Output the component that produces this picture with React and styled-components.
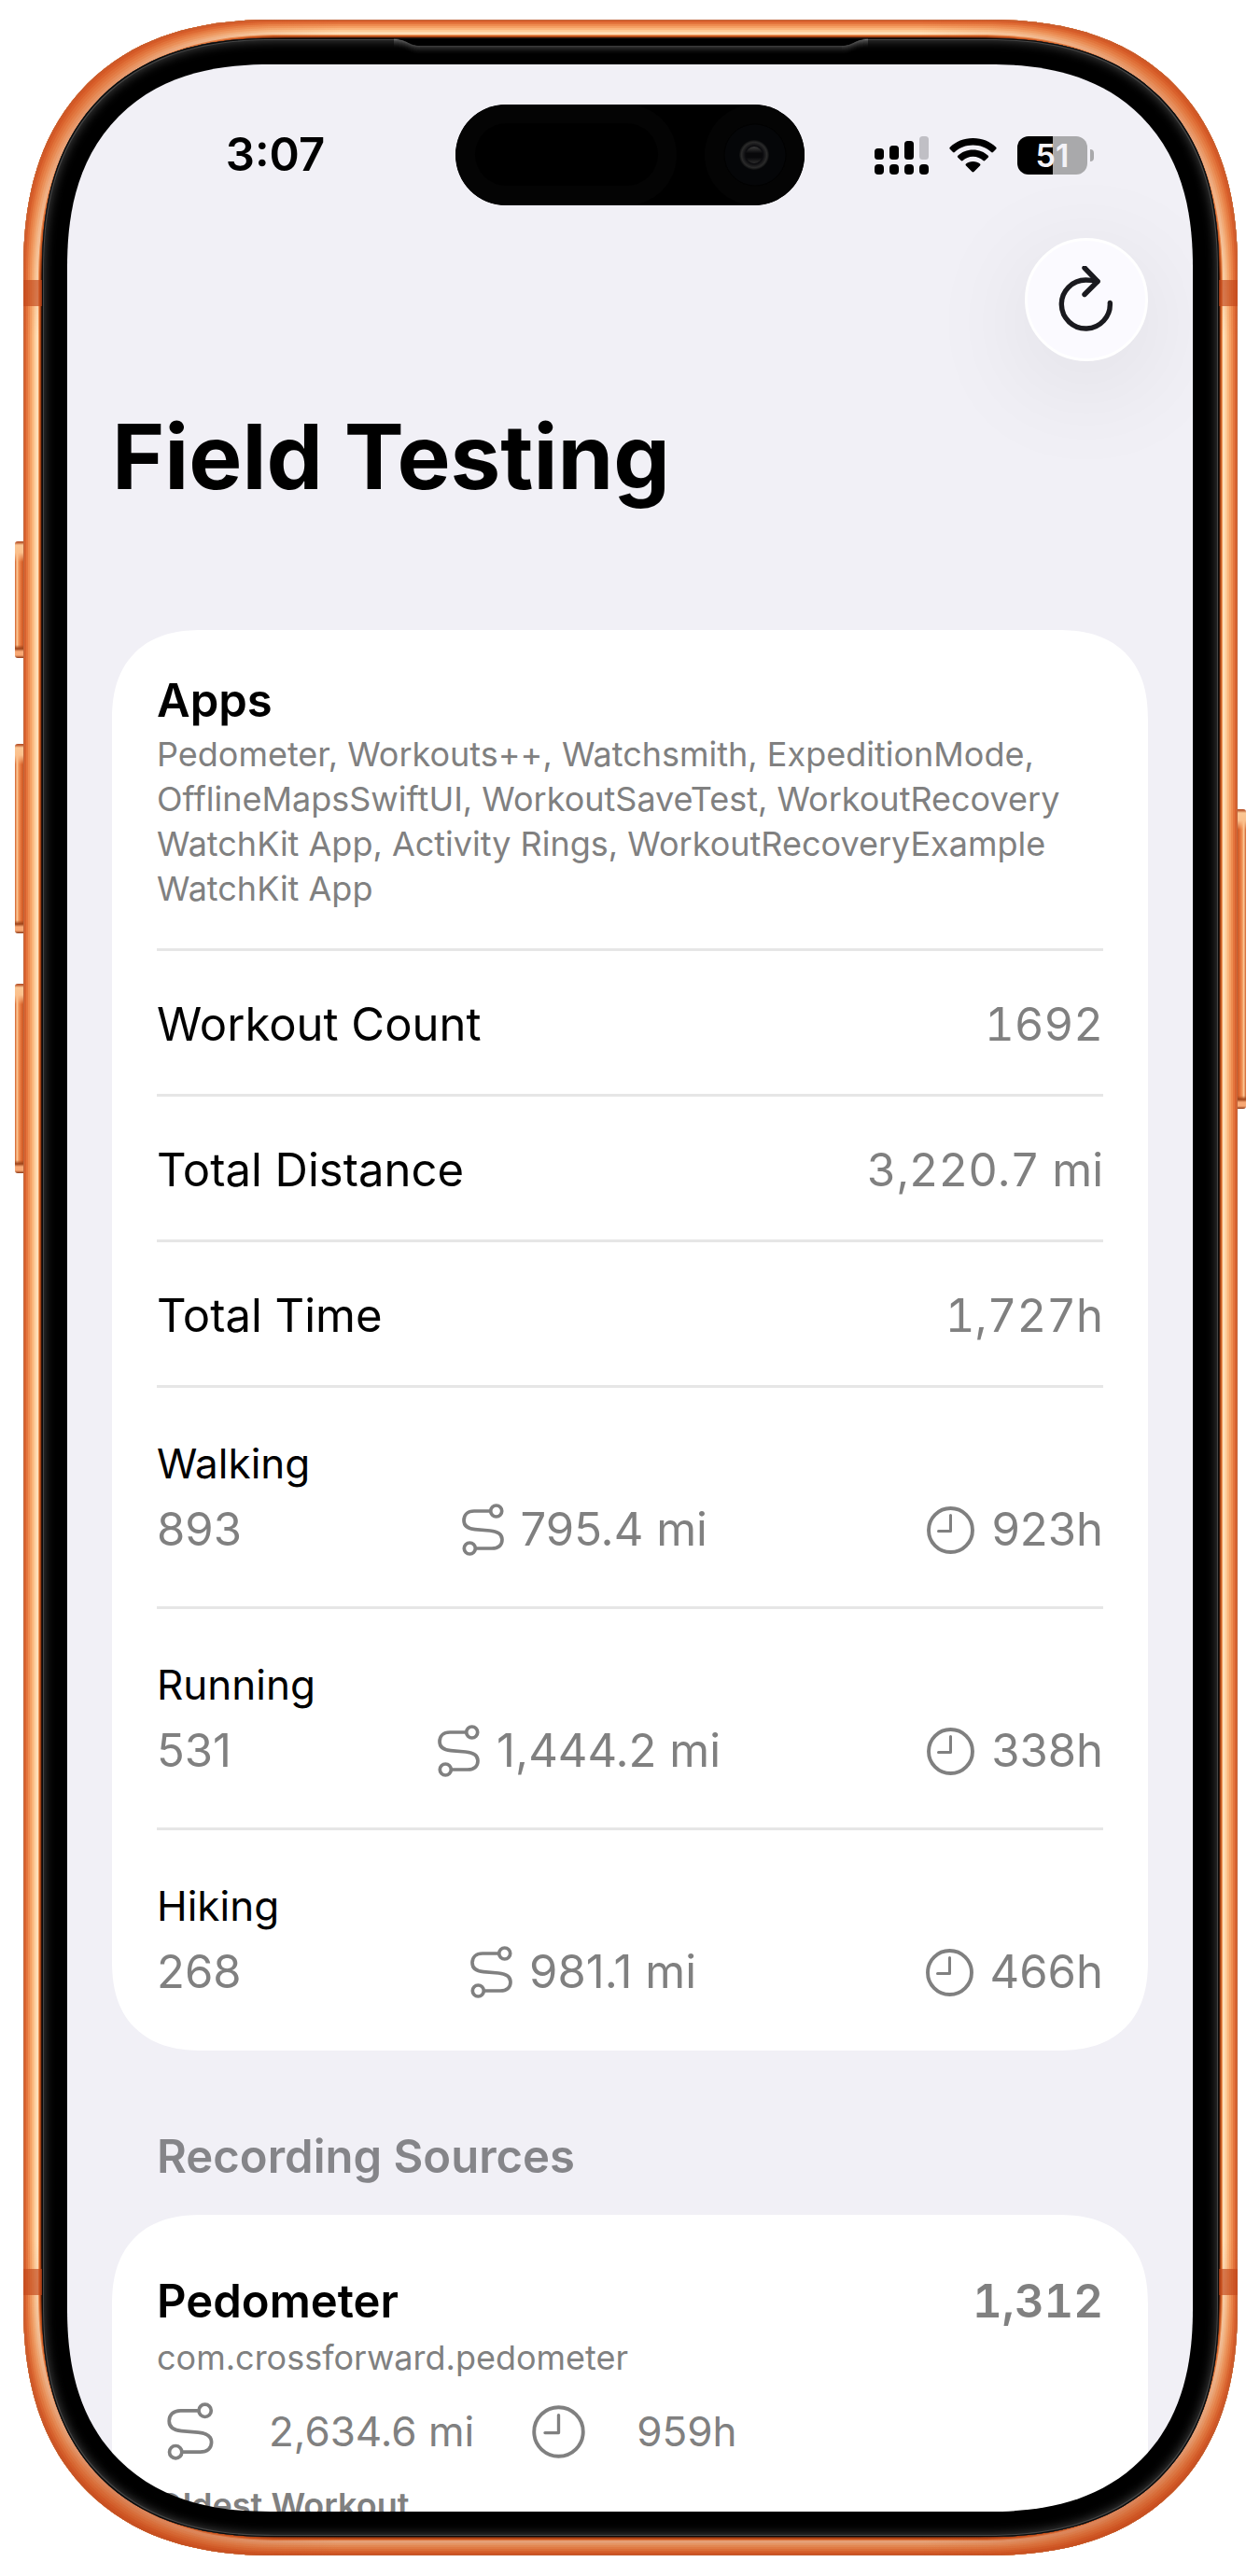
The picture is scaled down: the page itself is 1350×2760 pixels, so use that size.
import React from "react";
import styled, { createGlobalStyle, css } from "styled-components";

const apps = [
  "Pedometer",
  "Workouts++",
  "Watchsmith",
  "ExpeditionMode",
  "OfflineMapsSwiftUI",
  "WorkoutSaveTest",
  "WorkoutRecovery WatchKit App",
  "Activity Rings",
  "WorkoutRecoveryExample WatchKit App",
];

const totals = [
  { label: "Workout Count", value: "1692" },
  { label: "Total Distance", value: "3,220.7 mi" },
  { label: "Total Time", value: "1,727h" },
];

const activities = [
  { name: "Walking", count: "893", distance: "795.4 mi", time: "923h" },
  { name: "Running", count: "531", distance: "1,444.2 mi", time: "338h" },
  { name: "Hiking", count: "268", distance: "981.1 mi", time: "466h" },
];

const sources = [
  {
    name: "Pedometer",
    bundle: "com.crossforward.pedometer",
    count: "1,312",
    distance: "2,634.6 mi",
    time: "959h",
  },
];

const sideButtons = [
  { side: "left", top: 559, height: 125 },
  { side: "left", top: 776, height: 203 },
  { side: "left", top: 1033, height: 203 },
  { side: "right", top: 846, height: 321 },
];

const GlobalStyle = createGlobalStyle`
  * {
    box-sizing: border-box;
  }

  body {
    margin: 0;
    background: #fff;
    color: #000;
    font-family: Inter, "Liberation Sans", sans-serif;
  }

  h1, h2, h3, p, dl, dt, dd {
    margin: 0;
    padding: 0;
  }
`;

// continuous corners where the browser has them, plain round ones elsewhere
const corner = (round, smooth) => css`
  border-radius: ${round}px;

  @supports (corner-shape: superellipse(1.24)) {
    border-radius: ${smooth}px;
    corner-shape: superellipse(1.24);
  }
`;

const Page = styled.div`
  height: 100vh;
  padding: 21px 24px 22px 25px;
`;

const Frame = styled.div`
  position: relative;
  display: flex;
  height: 100%;
  padding: 20px;
  ${corner(236, 270)}
  background: #32160a;
  box-shadow:
    inset 0 0 0 1px #c0663c,
    inset 0 0 0 3px #d9622f,
    inset 0 0 0 5px #e4753d,
    inset 0 0 0 7px #ee8c50,
    inset 0 0 0 9px #f5a064,
    inset 0 0 0 11px #fab57b,
    inset 0 0 0 13px #fdca97,
    inset 0 0 0 15px #fedbb2,
    inset 0 0 0 16px #fee2bf,
    inset 0 0 0 17px #f09a5c,
    inset 0 0 0 18px #cc5f26,
    inset 0 0 0 19px #9c3f14;

  &::before {
    content: "";
    position: absolute;
    inset: 0;
    ${corner(236, 270)}
    background:
      radial-gradient(circle at 40px 40px, rgba(206, 78, 28, 0.5) 60px, rgba(206, 78, 28, 0) 300px),
      radial-gradient(circle at calc(100% - 40px) 40px, rgba(206, 78, 28, 0.5) 60px, rgba(206, 78, 28, 0) 300px),
      radial-gradient(circle at 40px calc(100% - 40px), rgba(196, 72, 26, 0.5) 60px, rgba(196, 72, 26, 0) 300px),
      radial-gradient(circle at calc(100% - 40px) calc(100% - 40px), rgba(196, 72, 26, 0.5) 60px, rgba(196, 72, 26, 0) 300px),
      linear-gradient(to top, rgba(190, 66, 20, 0.4) 20px, rgba(190, 66, 20, 0) 120px);
  }
`;

const SideButton = styled.span`
  position: absolute;
  top: ${({ $top }) => $top}px;
  ${({ $side }) => $side}: -9px;
  width: 9px;
  height: ${({ $height }) => $height}px;
  border-radius: ${({ $side }) => ($side === "left" ? "3px 0 0 3px" : "0 3px 3px 0")};
  background:
    linear-gradient(
      to bottom,
      #b9542a 1px,
      #fbc794 4px,
      #fbc08c 12px,
      rgba(240, 140, 80, 0) 22px calc(100% - 14px),
      #9c4218 calc(100% - 10px),
      #f8a874 calc(100% - 7px) calc(100% - 3px),
      #8a3513 100%
    ),
    linear-gradient(
      ${({ $side }) => ($side === "left" ? "to right" : "to left")},
      #d9743f 1px,
      #ffd2a2 2px,
      #f19458 4px,
      #de6a32 7px,
      #cb5723 9px
    );
`;

const AntennaBand = styled.span`
  position: absolute;
  left: 0;
  right: 0;
  ${({ $edge }) => $edge}: 279px;
  height: 28px;
  background: rgba(194, 72, 28, 0.66);
`;

const Bezel = styled.div`
  position: relative;
  flex: 1;
  min-width: 0;
  padding: 28px 28px 27px 27px;
  ${corner(216, 248)}
  background: #000;
  box-shadow:
    inset 0 0 0 1px #0a0a0a,
    inset 0 0 0 2px #444,
    inset 0 0 12px 2px #484848;
`;

const Earpiece = styled.svg`
  position: absolute;
  top: 0;
  left: 50%;
  width: 508px;
  height: 24px;
  margin-left: -254px;
`;

const Screen = styled.main`
  position: relative;
  height: 100%;
  overflow-x: hidden;
  overflow-y: auto;
  scrollbar-width: none;
  ${corner(189, 218)}
  background: #f1f0f6;
`;

const StatusBar = styled.header`
  display: grid;
  grid-template-columns: 1fr 374px 1fr;
  align-items: center;
  padding-top: 43px;
`;

const Time = styled.time`
  padding-left: 30px;
  text-align: center;
  font-size: 49px;
  line-height: 60px;
  font-weight: 600;
`;

const Island = styled.svg`
  display: block;
  width: 374px;
  height: 108px;
`;

const StatusIcons = styled.div`
  display: flex;
  justify-content: center;
  align-items: center;
  gap: 22px;
  padding-right: 31px;
`;

const Battery = styled.div`
  display: flex;
  align-items: center;
  gap: 3px;

  &::after {
    content: "";
    width: 4px;
    height: 13px;
    border-radius: 0 4px 4px 0;
    background: #a9a9ab;
  }
`;

const BatteryLevel = styled.span`
  width: 75px;
  height: 41px;
  border-radius: 12px;
  background: linear-gradient(to right, #000 51%, #a9a9ab 51%);
  color: #f4f3f8;
  font-size: 34px;
  line-height: 41px;
  font-weight: 600;
  text-align: center;
`;

const Toolbar = styled.div`
  display: flex;
  justify-content: flex-end;
  padding: 35px 48px 0;
`;

const RefreshButton = styled.button`
  display: flex;
  justify-content: center;
  align-items: center;
  width: 132px;
  height: 132px;
  padding: 0;
  border: 3px solid #fff;
  border-radius: 50%;
  background: #fbfaff;
  box-shadow: 0 24px 120px rgba(0, 0, 0, 0.09);
  cursor: pointer;
`;

const Title = styled.h1`
  padding: 42px 48px 0;
  font-size: 96px;
  line-height: 120px;
  font-weight: 700;
`;

const Card = styled.section`
  margin: ${({ $first }) => ($first ? "126px" : "29px")} 48px 0;
  padding: 0 48px 2px;
  ${corner(84, 96)}
  background: #fff;
`;

const Divided = css`
  border-bottom: 3px solid #e6e6e6;

  &:last-child {
    border-bottom: 0;
  }
`;

const AppsRow = styled.div`
  padding: 43px 0 40px;
  ${Divided}
`;

const RowTitle = styled.h3`
  font-size: 49px;
  line-height: 66px;
  font-weight: 600;
`;

const Caption = styled.p`
  color: #808080;
  font-size: 36px;
  line-height: 48px;
  font-weight: ${({ $strong }) => ($strong ? 600 : 400)};
`;

const Totals = styled.dl`
  border-bottom: 3px solid #e6e6e6;
`;

const TotalRow = styled.div`
  display: flex;
  justify-content: space-between;
  padding: 48px 0 43px;
  font-size: 49px;
  line-height: 62px;
  ${Divided}

  dd {
    color: #808080;
    font-variant-numeric: tabular-nums;
  }
`;

const ActivityRow = styled.div`
  padding: 51px 0 49px;
  ${Divided}
`;

const ActivityName = styled.h3`
  font-size: 44px;
  line-height: 60px;
  font-weight: 400;
`;

const ActivityStats = styled.div`
  display: flex;
  justify-content: space-between;
  align-items: center;
  margin-top: 8px;
  color: #808080;
  font-size: 49px;
  line-height: 66px;
`;

const Stat = styled.span`
  display: flex;
  align-items: center;
  gap: 18px;
`;

const SectionHeading = styled.h2`
  padding: 81px 96px 0;
  color: #858589;
  font-size: 49px;
  line-height: 66px;
  font-weight: 600;
`;

const SourceRow = styled.article`
  padding: 60px 0 48px;
  ${Divided}
`;

const SourceHead = styled.div`
  display: flex;
  justify-content: space-between;
  margin-bottom: 3px;
`;

const SourceCount = styled.span`
  color: #808080;
  font-size: 49px;
  line-height: 66px;
  font-weight: 600;
  font-variant-numeric: tabular-nums;
`;

const SourceStats = styled.div`
  display: flex;
  gap: 54px;
  margin: 19px 0;
  color: #808080;
  font-size: 44px;
  line-height: 72px;
`;

const SourceStat = styled.span`
  display: grid;
  grid-template-columns: 72px auto;
  gap: 48px;
  align-items: center;

  svg {
    justify-self: center;
  }
`;

const RouteIcon = ({ size = 56 }) => (
  <svg width={(size * 45) / 56} height={size} viewBox="0 0 45 56" fill="none" stroke="currentColor" strokeWidth={(3.7 * 56) / size} aria-hidden="true">
    <circle cx="36.7" cy="8" r="6" />
    <circle cx="8.3" cy="48" r="6" />
    <path d="M30.5 8H13C6 8 2 12 2 18C2 24 7 27 14 27.6L30 29C38 29.8 43 33 43 38.5C43 44.5 39 48 32 48H14.5" />
  </svg>
);

const ClockIcon = ({ size = 51 }) => (
  <svg width={size} height={size} viewBox="0 0 51 51" fill="none" stroke="currentColor" strokeWidth={(3.9 * 51) / size} strokeLinecap="round" strokeLinejoin="round" aria-hidden="true">
    <circle cx="25.5" cy="25.5" r="23.5" />
    <path d="M25.5 9.5V26.5H12.5" strokeWidth="3" />
  </svg>
);

const RefreshIcon = () => (
  <svg width="60" height="72" viewBox="0 0 60 72" fill="none" stroke="#1a1a1f" strokeWidth="5.4" strokeLinecap="round" strokeLinejoin="round" aria-hidden="true">
    <path d="M55.3 39.5A26 26 0 1 1 29.3 15Q36 15 42 16.5" />
    <path d="M28 2L42 16.5L28 30.5" />
  </svg>
);

const SignalIcon = () => (
  <svg width="58" height="41" viewBox="0 0 58 41" aria-hidden="true">
    <rect x="0" y="13" width="10" height="12" rx="3.5" />
    <rect x="16" y="10" width="10" height="15" rx="3.5" />
    <rect x="32" y="5" width="10" height="20" rx="3.5" />
    <rect x="48" y="0" width="10" height="25" rx="3.5" fill="#c0bfc5" />
    <rect x="0" y="30" width="10" height="11" rx="4" />
    <rect x="16" y="30" width="10" height="11" rx="4" />
    <rect x="32" y="30" width="10" height="11" rx="4" />
    <rect x="48" y="30" width="10" height="11" rx="4" />
  </svg>
);

const WifiIcon = () => (
  <svg width="51" height="37" viewBox="0 0 51 37" aria-hidden="true">
    <path d="M25.5 0C35.5 0 44 3.6 50.2 9.8C50.8 10.4 50.8 11.1 50.2 11.7L47 15C46.4 15.6 45.7 15.6 45.1 15C40 10.2 33.2 7.5 25.5 7.5S11 10.2 5.9 15C5.3 15.6 4.6 15.6 4 15L.8 11.7C.2 11.1.2 10.4.8 9.8C7 3.6 15.5 0 25.5 0Z" />
    <path d="M25.5 12.5C32 12.5 37.6 14.8 41.7 18.8C42.3 19.4 42.3 20.1 41.7 20.7L38.3 24C37.7 24.6 37 24.6 36.4 24C33.6 21.4 29.8 19.8 25.5 19.8S17.4 21.4 14.6 24C14 24.6 13.3 24.6 12.7 24L9.3 20.7C8.7 20.1 8.7 19.4 9.3 18.8C13.4 14.8 19 12.5 25.5 12.5Z" />
    <path d="M25.5 25C28.6 25 31.2 26 33 27.6C33.6 28.2 33.6 28.9 33 29.5L26.5 36.1C25.9 36.7 25.1 36.7 24.5 36.1L18 29.5C17.4 28.9 17.4 28.2 18 27.6C19.8 26 22.4 25 25.5 25Z" />
  </svg>
);

const Camera = () => (
  <Island viewBox="0 0 374 108" aria-hidden="true">
    <defs>
      <radialGradient id="lens">
        <stop offset="0" stopColor="#060608" />
        <stop offset="0.6" stopColor="#0c0c0f" />
        <stop offset="0.85" stopColor="#2a2a2a" />
        <stop offset="1" stopColor="#0b0c0d" />
      </radialGradient>
      <linearGradient id="glint" x1="0" y1="0" x2="0" y2="1">
        <stop offset="0" stopColor="#3c3c3c" />
        <stop offset="0.4" stopColor="#08080a" />
        <stop offset="0.65" stopColor="#08080a" />
        <stop offset="1" stopColor="#2c2c2c" />
      </linearGradient>
      <clipPath id="pill">
        <rect width="374" height="108" rx="54" />
      </clipPath>
    </defs>
    <g clipPath="url(#pill)">
      <rect width="374" height="108" fill="#000" />
      <rect width="237" height="108" rx="54" fill="#040404" />
      <rect x="21" y="20" width="196" height="67" rx="34" fill="#000" />
      <circle cx="321" cy="54" r="54" fill="#040404" />
      <circle cx="321" cy="54" r="33" fill="#050608" stroke="#020202" />
      <circle cx="320" cy="54" r="16" fill="url(#lens)" />
      <circle cx="320" cy="54" r="9" fill="url(#glint)" />
    </g>
  </Island>
);

const slotEdge = "M0 1C14 1 16 8 28 8H480C492 8 494 1 508 1";
const slotGlow = [0.27, 0.22, 0.17, 0.13, 0.1, 0.07, 0.05, 0.03, 0.02];

const EarpieceSlot = () => (
  <Earpiece viewBox="0 0 508 24" fill="none" aria-hidden="true">
    <path d="M28 1H480V20H28Z" fill="#000" />
    {slotGlow.map((opacity, index) => (
      <path key={index} d={slotEdge} stroke="#fff" strokeOpacity={opacity} transform={`translate(0 ${index})`} />
    ))}
    <path d={`${slotEdge}Z`} fill="#000" />
  </Earpiece>
);

const App = () => {
  return (
    <>
      <GlobalStyle />
      <Page>
        <Frame>
          {sideButtons.map((button) => (
            <SideButton
              key={`${button.side}-${button.top}`}
              $side={button.side}
              $top={button.top}
              $height={button.height}
            />
          ))}
          <AntennaBand $edge="top" />
          <AntennaBand $edge="bottom" />

          <Bezel>
            <EarpieceSlot />
            <Screen>
              <StatusBar>
                <Time>3:07</Time>
                <Camera />
                <StatusIcons>
                  <SignalIcon />
                  <WifiIcon />
                  <Battery>
                    <BatteryLevel>51</BatteryLevel>
                  </Battery>
                </StatusIcons>
              </StatusBar>

              <Toolbar>
                <RefreshButton type="button" aria-label="Refresh">
                  <RefreshIcon />
                </RefreshButton>
              </Toolbar>

              <Title>Field Testing</Title>

              <Card $first>
                <AppsRow>
                  <RowTitle>Apps</RowTitle>
                  <Caption>{apps.join(", ")}</Caption>
                </AppsRow>

                <Totals>
                  {totals.map((total) => (
                    <TotalRow key={total.label}>
                      <dt>{total.label}</dt>
                      <dd>{total.value}</dd>
                    </TotalRow>
                  ))}
                </Totals>

                {activities.map((activity) => (
                  <ActivityRow key={activity.name}>
                    <ActivityName>{activity.name}</ActivityName>
                    <ActivityStats>
                      <span>{activity.count}</span>
                      <Stat>
                        <RouteIcon />
                        {activity.distance}
                      </Stat>
                      <Stat>
                        <ClockIcon />
                        {activity.time}
                      </Stat>
                    </ActivityStats>
                  </ActivityRow>
                ))}
              </Card>

              <SectionHeading>Recording Sources</SectionHeading>

              <Card>
                {sources.map((source) => (
                  <SourceRow key={source.name}>
                    <SourceHead>
                      <RowTitle>{source.name}</RowTitle>
                      <SourceCount>{source.count}</SourceCount>
                    </SourceHead>
                    <Caption>{source.bundle}</Caption>
                    <SourceStats>
                      <SourceStat>
                        <RouteIcon size={62} />
                        {source.distance}
                      </SourceStat>
                      <SourceStat>
                        <ClockIcon size={57} />
                        {source.time}
                      </SourceStat>
                    </SourceStats>
                    <Caption $strong>Oldest Workout</Caption>
                  </SourceRow>
                ))}
              </Card>
            </Screen>
          </Bezel>
        </Frame>
      </Page>
    </>
  );
};

export default App;
